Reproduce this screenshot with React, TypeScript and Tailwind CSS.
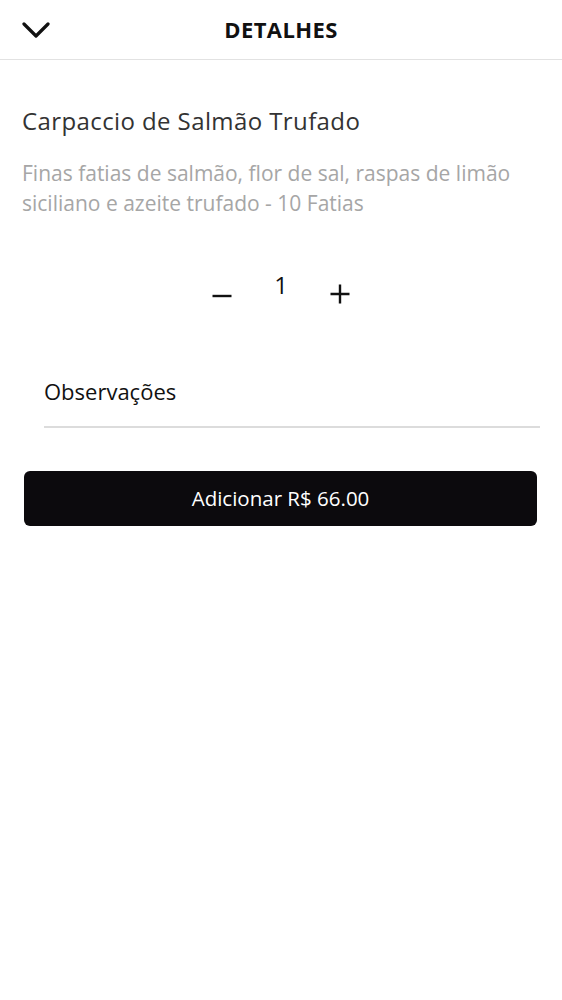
import { useState } from 'react';

export default function App() {
  const [qty, setQty] = useState(1);
  const price = 66;

  return (
    <div className="min-h-screen w-full bg-white font-['Open_Sans','Noto_Sans',sans-serif]">
      <header className="relative flex h-[60px] items-center justify-center border-b border-[#e2e2e2]">
        <button className="absolute left-[22px] top-[22px] text-[#111]">
          <svg width="28" height="16" viewBox="0 0 28 16" fill="none" stroke="currentColor" strokeWidth="3.2" strokeLinecap="round" strokeLinejoin="round">
            <path d="M2 2 L14 14 L26 2" />
          </svg>
        </button>
        <h1 className="text-[22px] font-bold tracking-[0.4px] text-[#111]">DETALHES</h1>
      </header>

      <main className="px-[22px]">
        <h2 className="mt-[45px] text-[24px] leading-[32px] tracking-[0.4px] text-[#333]">Carpaccio de Salmão Trufado</h2>
        <p className="mt-[21px] text-[21px] leading-[30px] text-[#a6a6a6]">
          Finas fatias de salmão, flor de sal, raspas de limão siciliano e azeite trufado - 10 Fatias
        </p>

        <div className="mt-[66px] flex items-center justify-center gap-[42px]">
          <button onClick={() => setQty(Math.max(1, qty - 1))} className="text-[#111]">
            <svg width="20" height="20" viewBox="0 0 20 20" stroke="currentColor" strokeWidth="2.4">
              <path d="M0.5 12 H19.5" />
            </svg>
          </button>
          <span className="-mt-[18px] w-[14px] text-center text-[24px] leading-[30px] text-[#111]">{qty}</span>
          <button onClick={() => setQty(qty + 1)} className="text-[#111]">
            <svg width="20" height="20" viewBox="0 0 20 20" stroke="currentColor" strokeWidth="2.4">
              <path d="M0.5 10 H19.5 M10 0.5 V19.5" />
            </svg>
          </button>
        </div>

        <div className="ml-[22px] mt-[72px] border-b-2 border-[#dcdcdc] pb-[20px]">
          <input
            placeholder="Observações"
            className="w-full bg-transparent text-[22px] leading-[30px] text-[#111] outline-none placeholder:text-[#111]"
          />
        </div>

        <button className="ml-[2px] mt-[43px] flex h-[55px] w-[513px] items-center justify-center rounded-[6px] bg-[#0c0a0d] text-[20.5px] text-white">
          Adicionar R$ {(price * qty).toFixed(2)}
        </button>
      </main>
    </div>
  );
}
